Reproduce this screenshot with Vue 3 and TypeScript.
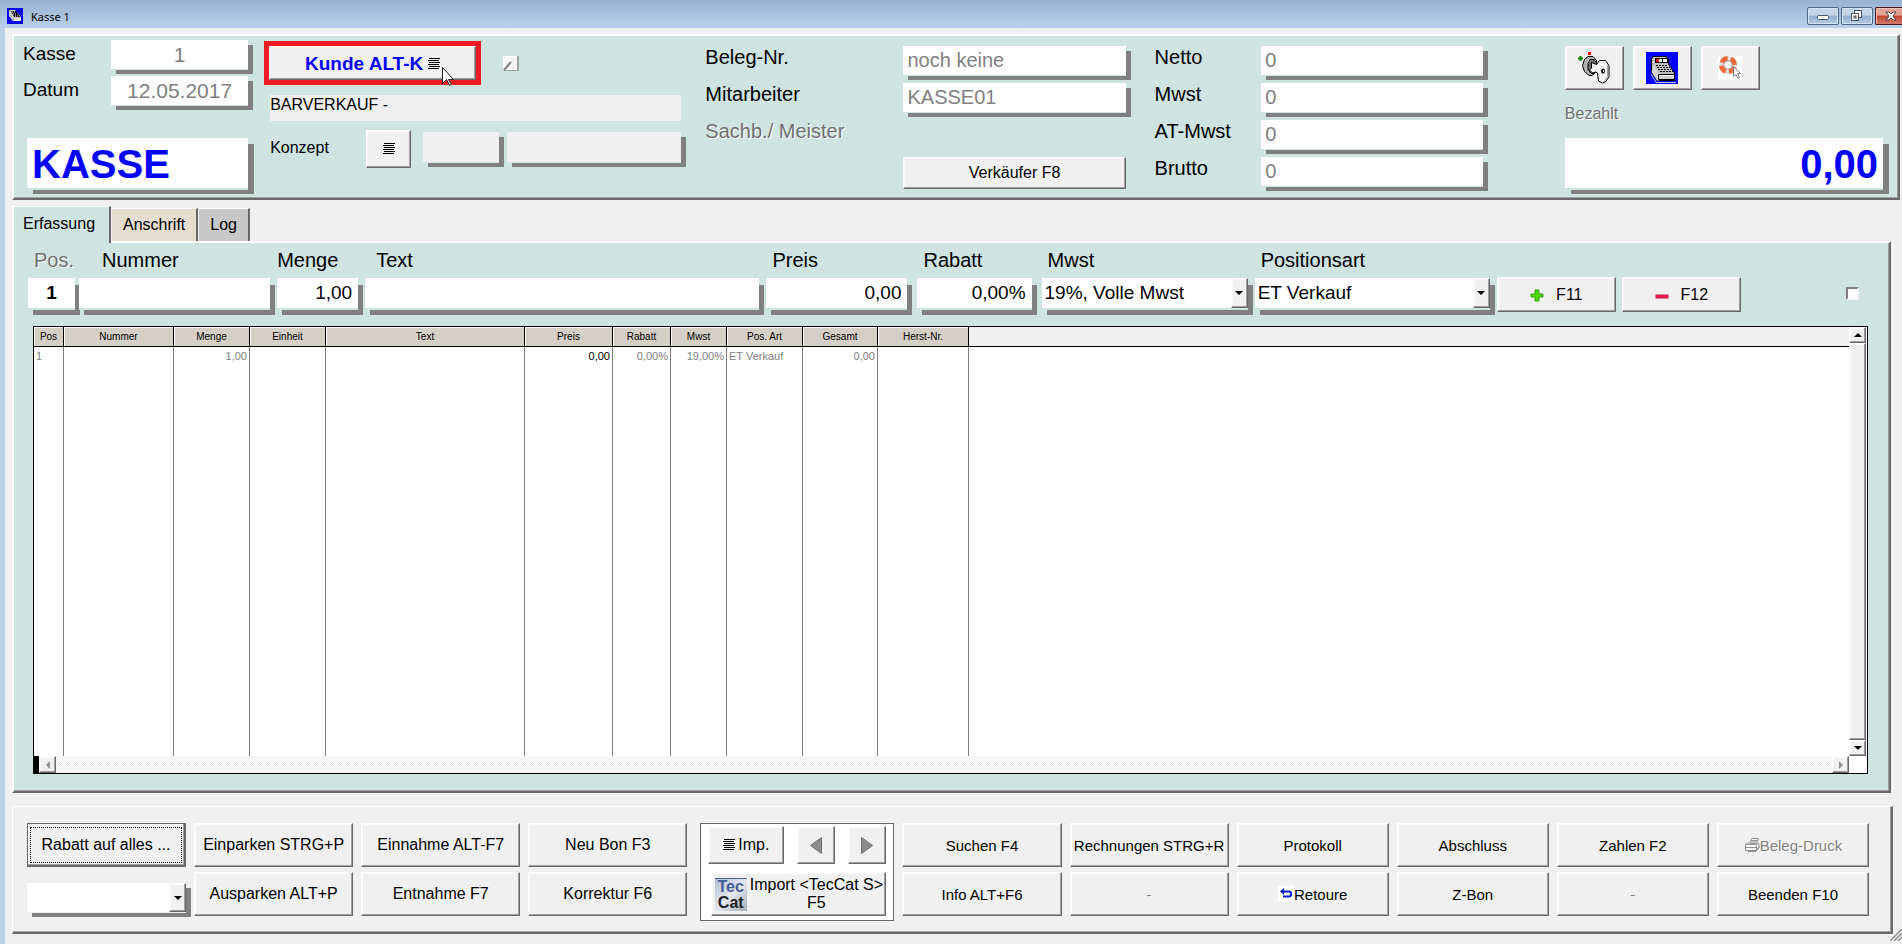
<script setup lang="ts">
import { ref } from 'vue'

interface Column {
  title: string
  width: number
  value: string
  align: 'left' | 'right'
  strong?: boolean
}

interface Action {
  label: string
  disabled?: boolean
  icon?: 'return' | 'printer'
}

const stripes = [0, 2, 4, 6, 8, 10]

const totals = [
  { id: 'netto', label: 'Netto', value: '0' },
  { id: 'mwst-summe', label: 'Mwst', value: '0' },
  { id: 'at-mwst', label: 'AT-Mwst', value: '0' },
  { id: 'brutto', label: 'Brutto', value: '0' },
]

const tabs = [
  { label: 'Erfassung', tone: 'active' },
  { label: 'Anschrift', tone: 'sand' },
  { label: 'Log', tone: 'grey' },
]

const columns: Column[] = [
  { title: 'Pos', width: 30, value: '1', align: 'left' },
  { title: 'Nummer', width: 110, value: '', align: 'left' },
  { title: 'Menge', width: 76, value: '1,00', align: 'right' },
  { title: 'Einheit', width: 76, value: '', align: 'left' },
  { title: 'Text', width: 199, value: '', align: 'left' },
  { title: 'Preis', width: 88, value: '0,00', align: 'right', strong: true },
  { title: 'Rabatt', width: 58, value: '0,00%', align: 'right' },
  { title: 'Mwst', width: 56, value: '19,00%', align: 'right' },
  { title: 'Pos. Art', width: 76, value: 'ET Verkauf', align: 'left' },
  { title: 'Gesamt', width: 75, value: '0,00', align: 'right' },
  { title: 'Herst-Nr.', width: 91, value: '', align: 'left' },
]

const leftActions: Action[][] = [
  [{ label: 'Einparken STRG+P' }, { label: 'Ausparken ALT+P' }],
  [{ label: 'Einnahme ALT-F7' }, { label: 'Entnahme F7' }],
  [{ label: 'Neu Bon F3' }, { label: 'Korrektur F6' }],
]

const rightActions: Action[][] = [
  [{ label: 'Suchen F4' }, { label: 'Info ALT+F6' }],
  [{ label: 'Rechnungen STRG+R' }, { label: '-', disabled: true }],
  [{ label: 'Protokoll' }, { label: 'Retoure', icon: 'return' }],
  [{ label: 'Abschluss' }, { label: 'Z-Bon' }],
  [{ label: 'Zahlen F2' }, { label: '-', disabled: true }],
  [{ label: 'Beleg-Druck', disabled: true, icon: 'printer' }, { label: 'Beenden F10' }],
]

const nummer = ref('')
const menge = ref('1,00')
const text = ref('')
const preis = ref('0,00')
const rabatt = ref('0,00%')
const mwst = ref('19%, Volle Mwst')
const positionsart = ref('ET Verkauf')
const rabattArt = ref('')
const marker = ref(false)
</script>

<template>
  <div class="window">
    <header class="titlebar">
      <svg class="title-icon" viewBox="0 0 16 16" aria-hidden="true">
        <rect width="16" height="16" fill="#0000f0" />
        <path d="M2 2h6l6 7v4H6L2 8z" fill="#c8c8c8" />
        <path d="M4 3h5l4 6H7z" fill="#000" />
        <path d="M5 4h1M7 4h1M6 6h1M8 6h1M8 8h1M10 8h1" stroke="#fff" />
        <path d="M7 10h7v3H7z" fill="#e8e8e8" />
      </svg>
      <h1>Kasse 1</h1>
      <div class="win-buttons">
        <button type="button" aria-label="Minimieren">
          <svg viewBox="0 0 30 16"><rect x="9.5" y="7.500" width="11" height="4" rx="1" fill="#fff" stroke="#4a5666" /></svg>
        </button>
        <button type="button" aria-label="Wiederherstellen">
          <svg viewBox="0 0 30 16">
            <rect x="12.500" y="2.500" width="7" height="7" fill="#fff" stroke="#4a5666" />
            <rect x="9.500" y="5.500" width="7" height="7" fill="#fff" stroke="#4a5666" />
            <rect x="12" y="8" width="2" height="2" fill="#8fabc8" stroke="#4a5666" />
          </svg>
        </button>
        <button type="button" class="close" aria-label="Schließen">
          <svg viewBox="0 0 30 16"><path d="M10 4h3l2 2 2-2h3l-3 4 3 4h-3l-2-2-2 2h-3l3-4z" fill="#fff" stroke="#4a3a42" /></svg>
        </button>
      </div>
    </header>

    <main class="client">
      <section class="head panel mint">
        <div class="head-shop">
          <div class="pair">
            <label for="kasse">Kasse</label>
            <input id="kasse" class="field centre" value="1" readonly />
          </div>
          <div class="pair">
            <label for="datum">Datum</label>
            <input id="datum" class="field centre" value="12.05.2017" readonly />
          </div>
          <output class="display">KASSE</output>
        </div>

        <div class="head-customer">
          <div class="customer-line">
            <div class="highlight">
              <button type="button" class="raised customer">
                <span>Kunde ALT-K</span>
                <svg class="stripes" viewBox="0 0 12 12" aria-hidden="true">
                  <rect v-for="y in stripes" :key="y" :x="y % 4 ? 0 : 1" :y="y" width="11" height="1" />
                </svg>
              </button>
              <svg class="pointer" viewBox="0 0 12 19" aria-hidden="true">
                <path d="M0.500 0.500v16l4-4 3 6 2-1-3-5h5z" fill="#fff" stroke="#222" />
              </svg>
            </div>
            <button type="button" class="note" aria-label="Notiz">
              <svg viewBox="0 0 16 15">
                <rect x="1" width="15" height="15" fill="#a0a0a0" />
                <rect width="14" height="14" fill="#fff" />
                <rect x="2" y="1" width="12" height="12" fill="#f4f4f4" />
                <path d="M1 14L8 6" stroke="#808080" stroke-width="2" />
              </svg>
            </button>
          </div>
          <output class="customer-name">BARVERKAUF -</output>
          <div class="concept">
            <label for="konzept-nr">Konzept</label>
            <button type="button" class="raised" aria-label="Konzept wählen">
              <svg class="stripes" viewBox="0 0 12 12" aria-hidden="true">
                <rect v-for="y in stripes" :key="y" :x="y % 4 ? 0 : 1" :y="y" width="11" height="1" />
              </svg>
            </button>
            <input id="konzept-nr" class="field dim" readonly />
            <input class="field dim" aria-label="Konzept Bezeichnung" readonly />
          </div>
        </div>

        <div class="head-receipt">
          <label for="beleg">Beleg-Nr.</label>
          <input id="beleg" class="field" value="noch keine" readonly />
          <label for="mitarbeiter">Mitarbeiter</label>
          <input id="mitarbeiter" class="field" value="KASSE01" readonly />
          <span class="off">Sachb./ Meister</span>
          <span></span>
          <span></span>
          <button type="button" class="raised seller">Verkäufer F8</button>
        </div>

        <div class="head-totals">
          <template v-for="t in totals" :key="t.id">
            <label :for="t.id">{{ t.label }}</label>
            <input :id="t.id" class="field" :value="t.value" readonly />
          </template>
        </div>

        <div class="head-sum">
          <div class="tools">
            <button type="button" class="raised" aria-label="Anmelden">
              <svg viewBox="0 0 32 32" width="32" height="32">
                <path d="M2.500 4v5M0 6.500h5" stroke="#008000" stroke-width="2" />
                <rect x="10" width="3" height="3" fill="#f00" />
                <path d="M10 4.500h5l3.500 4 1 6-2 6-3.500 3h-3l-4.500-4-2-6 2-6z" fill="#b4b4b4" stroke="#000" />
                <path d="M12 7.500h4l3 4v7l-3 3h-3l-3-4v-6z" fill="#707070" stroke="#000" />
                <path d="M13.500 10.500l5 2 3-4h6l3.500 5v11l-3 5-3.500 1.500-4-2-1-8-2-1-3 1-3-3 2-2z" fill="#f4f4f4" stroke="#000" />
                <path d="M29.500 13v11l-3 5" fill="none" stroke="#a0a0a0" />
                <ellipse cx="25" cy="19" rx="2" ry="2.500" fill="#000" />
                <rect x="25" y="18" width="1" height="2" fill="#fff" />
              </svg>
            </button>
            <button type="button" class="raised" aria-label="Kasse öffnen">
              <svg viewBox="0 0 32 32" width="32" height="32">
                <rect width="32" height="32" fill="#00f" />
                <path d="M7 4.500h13l2.500 2v5.500l6 9v7.500H11L5.500 20V7z" fill="#c0c0c0" stroke="#000" />
                <path d="M5.500 20L8 13l5 9v6.500H11z" fill="#d4d4d4" />
                <rect x="9.500" y="6.500" width="12" height="4" fill="#fff" stroke="#000" />
                <rect x="10" y="7" width="3" height="3" fill="#f00" />
                <path d="M16.500 7v3" stroke="#000" />
                <path d="M10 13.500h12M11 15.500h13M12 17.500h13M14 19.500h13" stroke="#000" stroke-dasharray="2 1" />
                <path d="M12.500 22.500h16v5h-16z" fill="#d0d0d0" stroke="#000" />
                <path d="M13 23.500h15" stroke="#fff" />
                <path d="M5 22l5 8.500h20" fill="none" stroke="#c0c0c0" />
              </svg>
            </button>
            <button type="button" class="raised" aria-label="Hilfe">
              <svg viewBox="0 0 24 24" width="24" height="24">
                <rect width="24" height="24" fill="#fff" />
                <circle cx="10" cy="9" r="6.500" fill="none" stroke="#e0dcda" stroke-width="5" />
                <circle cx="10" cy="9" r="6.500" fill="none" stroke="#ee6a3c" stroke-width="5" stroke-dasharray="7 3.210" stroke-dashoffset="-2" />
                <circle cx="10" cy="9" r="4" fill="#fff" stroke="#b0a8a4" />
                <path d="M15.500 10.500v10l2.500-2 2 4 1.500-1-2-4h3z" fill="#fff" stroke="#808080" />
              </svg>
            </button>
          </div>
          <span class="off paid">Bezahlt</span>
          <output class="display amount">0,00</output>
        </div>
      </section>

      <nav class="tabs" role="tablist">
        <button
          v-for="(tab, i) in tabs"
          :key="tab.label"
          type="button"
          role="tab"
          :aria-selected="i === 0"
          :class="['tab', tab.tone]"
        >{{ tab.label }}</button>
      </nav>

      <section class="page panel mint">
        <div class="entry">
          <div class="cell tight">
            <label class="off" for="pos">Pos.</label>
            <input id="pos" class="field line centre bold" value="1" readonly />
          </div>
          <div class="cell">
            <label class="inset-wide" for="nummer">Nummer</label>
            <input id="nummer" v-model="nummer" class="field line" />
          </div>
          <div class="cell">
            <label class="inset-none" for="menge">Menge</label>
            <input id="menge" v-model="menge" class="field line right" />
          </div>
          <div class="cell">
            <label class="inset-mid" for="text">Text</label>
            <input id="text" v-model="text" class="field line" />
          </div>
          <div class="cell spaced">
            <label for="preis">Preis</label>
            <input id="preis" v-model="preis" class="field line right" />
          </div>
          <div class="cell spaced">
            <label for="rabatt">Rabatt</label>
            <input id="rabatt" v-model="rabatt" class="field line right" />
          </div>
          <div class="cell">
            <label for="mwst">Mwst</label>
            <div class="combo line">
              <select id="mwst" v-model="mwst"><option>19%, Volle Mwst</option></select>
              <span class="drop raised" aria-hidden="true"><i class="tri down"></i></span>
            </div>
          </div>
          <div class="cell">
            <label for="positionsart">Positionsart</label>
            <div class="combo line">
              <select id="positionsart" v-model="positionsart"><option>ET Verkauf</option></select>
              <span class="drop raised" aria-hidden="true"><i class="tri down"></i></span>
            </div>
          </div>
          <div class="cell action">
            <button type="button" class="raised">
              <svg viewBox="0 0 14 14" width="14" height="14" aria-hidden="true">
                <path d="M5 2h4v4h4v3H9v4H5V9H1V6h4z" fill="#4fd80c" stroke="#3aa010" />
              </svg>
              <span>F11</span>
            </button>
          </div>
          <div class="cell action">
            <button type="button" class="raised">
              <svg viewBox="0 0 14 14" width="14" height="14" aria-hidden="true">
                <rect x="1" y="7" width="12" height="3" fill="#ff1450" stroke="#c01848" />
              </svg>
              <span>F12</span>
            </button>
          </div>
          <div class="cell tick">
            <input v-model="marker" type="checkbox" aria-label="Markierung" />
          </div>
        </div>

        <div class="grid">
          <div class="sheet">
            <table>
              <colgroup>
                <col v-for="c in columns" :key="c.title" :style="{ width: c.width + 'px' }" />
                <col />
              </colgroup>
              <thead>
                <tr>
                  <th v-for="c in columns" :key="c.title" scope="col">{{ c.title }}</th>
                  <td class="spare"></td>
                </tr>
              </thead>
              <tbody>
                <tr>
                  <td v-for="c in columns" :key="c.title" :class="[c.align, { strong: c.strong }]">{{ c.value }}</td>
                  <td></td>
                </tr>
                <tr class="filler">
                  <td v-for="c in columns" :key="c.title"></td>
                  <td></td>
                </tr>
              </tbody>
            </table>
          </div>
          <div class="vscroll">
            <button type="button" class="raised" aria-label="Nach oben"><i class="tri up"></i></button>
            <div class="thumb raised"></div>
            <button type="button" class="raised" aria-label="Nach unten"><i class="tri down"></i></button>
          </div>
          <div class="hscroll">
            <span class="split"></span>
            <button type="button" class="raised" aria-label="Nach links" disabled><i class="tri left"></i></button>
            <span class="track"></span>
            <button type="button" class="raised" aria-label="Nach rechts" disabled><i class="tri next"></i></button>
          </div>
        </div>
      </section>

      <section class="actions panel">
        <div class="stack roomy">
          <button type="button" class="raised default"><span>Rabatt auf alles ...</span></button>
          <div class="combo discount">
            <select v-model="rabattArt" aria-label="Rabattart"><option value=""></option></select>
            <span class="drop raised" aria-hidden="true"><i class="tri down"></i></span>
          </div>
        </div>
        <div v-for="(pair, i) in leftActions" :key="'l' + i" class="stack roomy">
          <button v-for="a in pair" :key="a.label" type="button" class="raised">{{ a.label }}</button>
        </div>
        <div class="import roomy">
          <div class="import-top">
            <button type="button" class="raised imp">
              <svg class="stripes" viewBox="0 0 12 12" aria-hidden="true">
                <rect v-for="y in stripes" :key="y" :x="y % 4 ? 0 : 1" :y="y" width="11" height="1" />
              </svg>
              <span>Imp.</span>
            </button>
            <button type="button" class="raised step" aria-label="Zurück">
              <svg viewBox="0 0 12 17" width="12" height="17"><path d="M11.500 0.500v16L0.500 8.500z" fill="#8c8c8c" stroke="#707070" /></svg>
            </button>
            <button type="button" class="raised step" aria-label="Weiter">
              <svg viewBox="0 0 12 17" width="12" height="17"><path d="M0.500 0.500v16L11.500 8.500z" fill="#8c8c8c" stroke="#707070" /></svg>
            </button>
          </div>
          <button type="button" class="raised catalog">
            <span class="teccat"><b>Tec</b><b>Cat</b></span>
            <span>Import &lt;TecCat S&gt;<br />F5</span>
          </button>
        </div>
        <div v-for="(pair, i) in rightActions" :key="'r' + i" class="stack">
          <button v-for="a in pair" :key="a.label" type="button" class="raised" :disabled="a.disabled">
            <svg v-if="a.icon === 'return'" viewBox="0 0 16 16" width="16" height="16" aria-hidden="true">
              <rect width="16" height="16" fill="#fff" />
              <path d="M5 5.500h6q2 0 2 2.500t-2 2.500H5" fill="none" stroke="#0018d8" stroke-width="2" />
              <path d="M2 5.500L6 2v7z" fill="#0018d8" />
            </svg>
            <svg v-else-if="a.icon === 'printer'" viewBox="0 0 16 16" width="16" height="16" aria-hidden="true">
              <path d="M5.500 6.500l2-5h7l-2 5zM7 3.500h6M6.500 5h6M1.500 7.500l3-2M14 6l1 1v4l-3 3M1.500 7.500h10l1 1v5h-11zM12 8l3-2M12.500 12l3-2M2 10.500h10M4 14.500h8" fill="#f8f8f8" stroke="#909090" />
            </svg>
            <span>{{ a.label }}</span>
          </button>
        </div>
      </section>
    </main>

    <svg class="grip" viewBox="0 0 12 12" aria-hidden="true">
      <path d="M0 12L12 0M4 12L12 4M8 12L12 8" stroke="#909090" stroke-width="1.500" />
    </svg>
  </div>
</template>

<style>
body {
  margin: 0;
}
</style>

<style scoped>
* {
  box-sizing: border-box;
}

.window {
  --mint: #cfe3e1;
  --face: #f0f0f0;
  --surface: var(--face);
  position: relative;
  display: flex;
  flex-direction: column;
  min-height: 100vh;
  overflow: hidden;
  background: var(--face);
  color: #000;
  font-family: "Liberation Sans", Arial, sans-serif;
  font-size: 15px;
}

button,
input,
select {
  margin: 0;
  font: inherit;
  color: inherit;
}

svg {
  display: block;
  flex: none;
}

/* Title bar */
.titlebar {
  display: flex;
  align-items: center;
  height: 28px;
  padding-left: 7px;
  background: linear-gradient(#98b3d1, #b9d1ea);
}

.title-icon {
  width: 16px;
  height: 16px;
  margin-top: 4px;
}

h1 {
  flex: 1;
  margin: 4px 0 0 8px;
  font: 11px "Noto Sans", "Open Sans", sans-serif;
}

.win-buttons {
  display: flex;
  gap: 2px;
  margin-top: 4px;
}

.win-buttons button {
  width: 32px;
  height: 18px;
  padding: 0;
  border: 1px solid #4d6785;
  border-radius: 2px;
  background: linear-gradient(#c3d5e8 45%, #93afcb 50%, #b4cde6);
  box-shadow: inset 0 0 0 1px #d5e4f3;
}

.win-buttons svg {
  width: 30px;
  height: 16px;
}

.win-buttons .close {
  width: 27px;
  overflow: hidden;
  border-color: #4a1420;
  border-right: 0;
  border-radius: 2px 0 0 2px;
  background: linear-gradient(#e2a397 45%, #bc4730 50%, #d5796a);
  box-shadow: inset 1px 1px 0 #eec0b8;
}

/* Shared surfaces */
.client {
  flex: 1;
  display: flex;
  flex-direction: column;
  padding: 6px 2px 10px 7px;
  border-left: 5px solid #bad1ea;
}

.panel {
  border: 2px solid;
  border-color: #fff #696969 #696969 #fff;
  box-shadow: inset -1px -1px 0 #a0a0a0;
}

.mint {
  --surface: var(--mint);
  background-color: var(--mint);
}

.raised {
  display: flex;
  align-items: center;
  justify-content: center;
  padding: 0;
  border: 1px solid;
  border-color: #fff #696969 #696969 #fff;
  border-radius: 0;
  background: var(--face);
  box-shadow: inset -1px -1px 0 #a0a0a0, inset 1px 1px 0 #fafafa;
  white-space: nowrap;
}

.raised:disabled {
  color: #808080;
  text-shadow: 1px 1px 0 #fff;
}

.stripes {
  width: 12px;
  height: 12px;
}

.field {
  min-width: 0;
  width: 100%;
  height: 29px;
  padding: 0 4px;
  border: 0;
  border-radius: 0;
  outline: 0;
  background: #fff;
  box-shadow: 0 1px 0 var(--surface), 5px 5px 0 #808080;
  color: #808080;
  font-size: 20px;
}

.field.dim {
  height: 30px;
  background: var(--face);
}

.field.line {
  height: 30px;
  padding: 0 6px;
  box-shadow: 0 2px 0 var(--surface), 5px 7px 0 #808080;
  color: #000;
  font-size: 19px;
}

.centre {
  text-align: center;
}

.right {
  text-align: right;
}

.bold {
  font-weight: bold;
}

.off {
  color: #707070;
  text-shadow: 1px 1px 0 #fff;
}

.display {
  display: block;
  height: 50px;
  padding: 0 5px;
  background: #fff;
  box-shadow: 0 2px 0 var(--surface), 6px 6px 0 #808080;
  color: #00f;
  font-size: 40px;
  font-weight: bold;
  line-height: 52px;
}

/* Header */
.head {
  display: grid;
  grid-template-columns:
    minmax(0, 250fr) minmax(0, 441fr) minmax(0, 449fr)
    minmax(0, 410fr) minmax(0, 333fr);
  padding-bottom: 9px;
  font-size: 20px;
}

.head-shop {
  display: flex;
  flex-direction: column;
  gap: 7px;
  padding: 4px 16px 0 9px;
}

.pair {
  display: grid;
  grid-template-columns: minmax(0, 88fr) minmax(0, 137fr);
}

.pair label {
  font-size: 19px;
  line-height: 27px;
}

.pair .field {
  font-size: 21px;
}

.head-shop .display {
  margin: 26px 0 0 4px;
}

.head-customer {
  padding: 5px 24px 0 0;
  font-size: 16px;
}

.customer-line {
  display: flex;
  align-items: center;
  gap: 22px;
}

.highlight {
  position: relative;
  width: 217px;
  border: 5px solid #ed1c24;
}

.customer {
  gap: 5px;
  width: 100%;
  height: 34px;
  padding-top: 2px;
  color: #00f;
  font-size: 19px;
  font-weight: bold;
}

.customer svg {
  fill: #000;
}

.pointer {
  position: absolute;
  left: 173px;
  top: 21px;
  width: 12px;
  height: 19px;
}

.note {
  padding: 0;
  border: 0;
  background: none;
}

.note svg {
  width: 16px;
  height: 15px;
}

.customer-name {
  display: block;
  height: 26px;
  margin: 10px 0 0 6px;
  background: var(--face);
  line-height: 20px;
}

.concept {
  display: grid;
  grid-template-columns: 96px 45px minmax(0, 88fr) minmax(0, 183fr);
  align-items: start;
  margin: 9px 0 0 6px;
}

.concept label {
  line-height: 36px;
}

.concept .raised {
  height: 38px;
}

.concept .field {
  width: auto;
  margin: 2px 0 0 12px;
}

.concept .field:last-child {
  margin-left: 8px;
}

.head-receipt,
.head-totals {
  display: grid;
  align-content: start;
  align-items: start;
  gap: 8px 0;
  padding-top: 10px;
}

.head-receipt > *,
.head-totals > * {
  min-height: 29px;
}

.head-receipt label,
.head-receipt .off,
.head-totals label {
  line-height: 23px;
}

.head-receipt {
  grid-template-columns: minmax(0, 198fr) minmax(0, 222fr);
  padding-right: 29px;
}

.head-totals {
  grid-template-columns: minmax(0, 107fr) minmax(0, 222fr);
  padding-right: 82px;
}

.seller {
  height: 32px;
  font-size: 16px;
}

.head-sum {
  padding: 10px 15px 0 0;
}

.tools {
  display: flex;
  gap: 9px;
}

.tools .raised {
  width: 59px;
  height: 44px;
}

.paid {
  display: block;
  margin: 14px 0;
  font-size: 16px;
  line-height: 20px;
}

.amount {
  text-align: right;
}

/* Tabs */
.tabs {
  display: flex;
  align-items: flex-end;
  gap: 1px;
  margin-top: 6px;
  font-size: 16px;
}

.tab {
  height: 33px;
  padding: 0 11px;
  border: 1px solid;
  border-width: 1px 2px 0 0;
  border-color: #fff #696969 transparent #fff;
  border-radius: 0;
}

.tab.active {
  z-index: 1;
  height: 37px;
  margin-bottom: -2px;
  padding: 0 14px 3px 9px;
  border-left-width: 2px;
  background: #cfe3e1;
}

.tab.sand {
  background: #e4ddd0;
}

.tab.grey {
  background: #c8c8c8;
}

/* Entry page */
.page {
  flex: 1;
  display: flex;
  flex-direction: column;
  margin-right: 9px;
  padding: 5px 21px 17px 19px;
}

.entry {
  display: grid;
  grid-template-columns:
    minmax(0, 51fr) minmax(0, 198fr) minmax(0, 88fr) minmax(0, 401fr)
    minmax(0, 151fr) minmax(0, 124fr) minmax(0, 213fr) minmax(0, 242fr)
    minmax(0, 125fr) minmax(0, 125fr) minmax(0, 142fr);
  margin: 0 -21px 14px -5px;
}

.cell {
  padding-right: 7px;
}

.cell.tight {
  padding-right: 4px;
}

.cell.spaced {
  padding-right: 10px;
}

.cell label {
  display: block;
  margin-bottom: 6px;
  padding-left: 6px;
  font-size: 20px;
  line-height: 24px;
}

.cell .inset-none {
  padding-left: 0;
}

.cell .inset-mid {
  padding-left: 11px;
}

.cell .inset-wide {
  padding-left: 23px;
}

.combo {
  display: grid;
  height: 30px;
  background: #fff;
  box-shadow: 0 1px 0 var(--surface), 5px 5px 0 #808080;
}

.combo.line {
  box-shadow: 0 2px 0 var(--surface), 5px 7px 0 #808080;
}

.combo > * {
  grid-area: 1 / 1;
}

.combo select {
  min-width: 0;
  padding: 0 20px 2px 3px;
  border: 0;
  outline: 0;
  background: transparent;
  font-size: 19px;
  appearance: none;
}

.drop {
  justify-self: end;
  width: 17px;
  pointer-events: none;
}

.action {
  padding: 29px 6px 0 0;
}

.action .raised {
  gap: 12px;
  width: 100%;
  height: 35px;
  font-size: 16px;
}

.tick {
  display: flex;
  align-items: flex-end;
  justify-content: flex-end;
  padding: 0 30px 12px 0;
}

.tick input {
  width: 13px;
  height: 13px;
  border: 2px solid;
  border-color: #808080 #f4f4f4 #f4f4f4 #808080;
  background: #fff;
  appearance: none;
}

.tick input:checked {
  background: #000;
}

/* Position table */
.grid {
  flex: 1;
  display: grid;
  grid-template-columns: minmax(0, 1fr) 18px;
  grid-template-rows: minmax(0, 1fr) 17px;
  border: 1px solid #000;
  background: #fff;
}

.sheet {
  grid-area: 1 / 1;
  display: flex;
  min-height: 400px;
}

table {
  flex: 1;
  width: 100%;
  table-layout: fixed;
  border-collapse: separate;
  border-spacing: 0;
  font-size: 10px;
}

th,
.spare {
  height: 20px;
  padding: 0;
  border-right: 1px solid #000;
  border-bottom: 1px solid #000;
  background: #d4d0c8;
  box-shadow: inset 1px 1px 0 #fff;
  font-weight: normal;
}

.spare {
  border-right: 0;
  background: var(--face);
  box-shadow: none;
}

tbody td {
  height: 18px;
  padding: 0 2px;
  border-right: 1px solid #808080;
  color: #808080;
  font-size: 11px;
  white-space: nowrap;
}

tbody td:last-child {
  border-right: 0;
}

tbody .strong {
  color: #000;
}

.filler td {
  height: auto;
}

.vscroll {
  grid-area: 1 / 2;
  display: flex;
  flex-direction: column;
  padding-right: 1px;
}

.vscroll .raised {
  height: 16px;
}

.vscroll .thumb {
  flex: 1;
}

.hscroll {
  grid-area: 2 / 1;
  display: flex;
}

.split {
  width: 5px;
  background: #000;
}

.hscroll .raised {
  width: 17px;
}

.track {
  flex: 1;
  background: conic-gradient(#fff 25%, #ececec 0 50%, #fff 0 75%, #ececec 0) 0 0 / 2px 2px;
}

.tri {
  border: 4px solid transparent;
}

.tri.down {
  border-top-color: #000;
  border-bottom: 0;
}

.tri.up {
  border-bottom-color: #000;
  border-top: 0;
}

.tri.left {
  border-right-color: #909090;
  border-left: 0;
}

.tri.next {
  border-left-color: #909090;
  border-right: 0;
}

/* Action bar */
.actions {
  display: grid;
  grid-template-columns:
    repeat(4, minmax(0, 159fr)) minmax(0, 199fr)
    repeat(2, minmax(0, 159fr)) repeat(4, minmax(0, 152fr));
  gap: 8px;
  margin: 13px 7px 0 0;
  padding: 16px 22px 11px 14px;
  border-width: 1px 2px 2px 1px;
}

.roomy {
  font-size: 16px;
}

.stack {
  display: flex;
  flex-direction: column;
  gap: 5px;
}

.stack .raised {
  height: 44px;
}

.stack .default {
  border: 2px solid #696969;
  border-width: 1px 2px 2px 1px;
}

.default span {
  flex: 1;
  margin: 3px 2px;
  border: 1px dotted #000;
  line-height: 34px;
}

.discount {
  height: 29px;
  margin-top: 11px;
}

.stack .drop {
  height: 29px;
}

.import {
  display: flex;
  flex-direction: column;
  gap: 8px;
  margin-left: 5px;
  padding: 2px 7px 4px;
  border: 1px solid #696969;
  background: #fff;
}

.import-top {
  display: flex;
  justify-content: space-between;
}

.imp {
  gap: 3px;
  width: 76px;
  height: 38px;
}

.step {
  width: 38px;
}

.catalog {
  gap: 3px;
  height: 44px;
  margin-left: 3px;
  line-height: 18px;
}

.teccat {
  display: flex;
  flex-direction: column;
  width: 32px;
  height: 33px;
  border-top: 1px solid #4a5f94;
  background: linear-gradient(135deg, #b4bdd4, #e4e8f0 50%, #a8acb8);
  font-size: 16px;
  line-height: 16px;
}

.teccat b {
  color: #222;
}

.teccat b:first-child {
  color: #465c92;
}

.grip {
  position: absolute;
  right: 0;
  bottom: 3px;
  width: 12px;
  height: 12px;
}
</style>
